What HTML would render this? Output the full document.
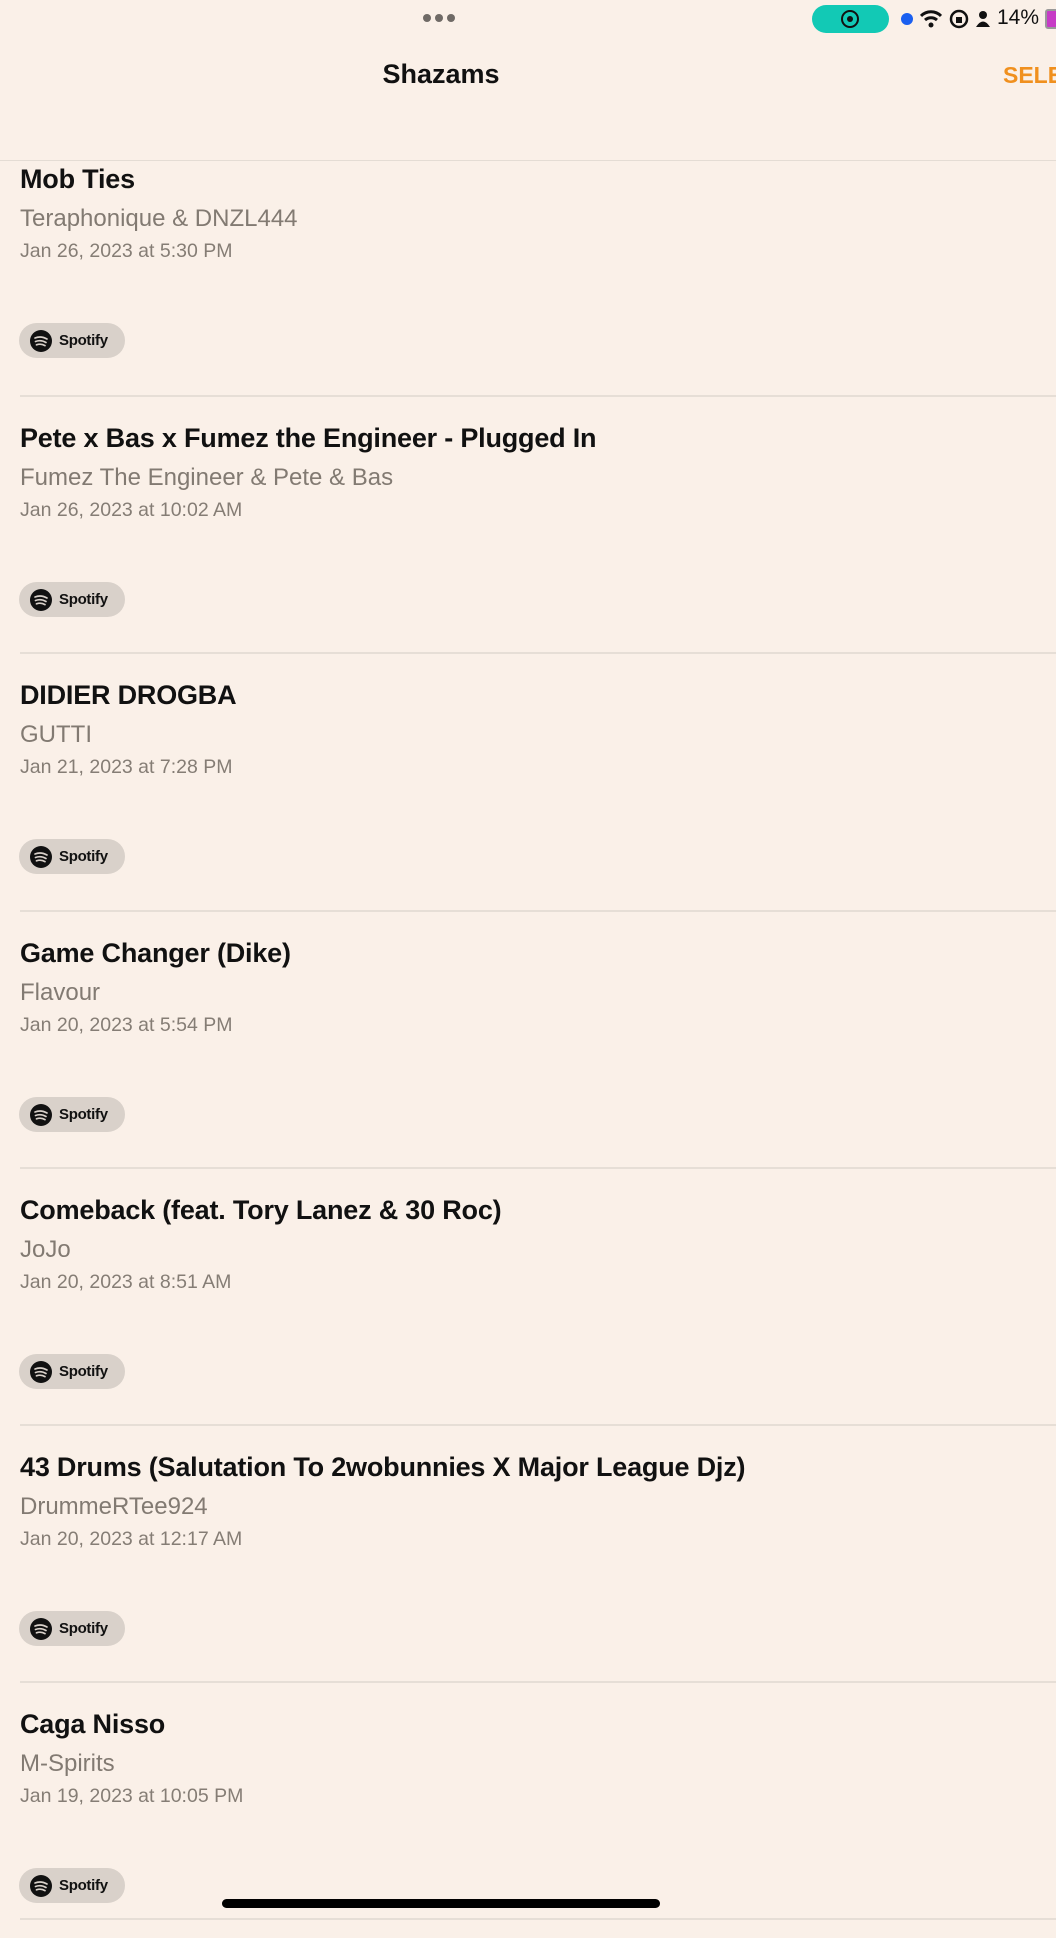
<!DOCTYPE html>
<html><head><meta charset="utf-8"><style>
*{margin:0;padding:0;box-sizing:border-box}
body{width:1056px;height:1920px;overflow:hidden;background:#faf0e8;font-family:"Liberation Sans",sans-serif;position:relative}
.abs{position:absolute}
.hdr{left:0;top:0;width:1056px;height:161px;background:#faf0e8;border-bottom:1.5px solid #e4dcd4;z-index:2}
.row{position:absolute;left:0;width:1056px;height:257px}
.row .ln{position:absolute;left:20px;right:0;top:0;height:1.5px;background:#e6ded6}
.t{position:absolute;left:20px;top:28px;font-size:27px;font-weight:bold;color:#111;letter-spacing:-0.2px;white-space:nowrap}
.a{position:absolute;left:20px;top:69px;font-size:24px;color:#827a72;white-space:nowrap}
.d{position:absolute;left:20px;top:104px;font-size:19.5px;color:#857d75;white-space:nowrap}
.p{position:absolute;left:19px;top:187px;width:106px;height:35px;border-radius:18px;background:#d9d1ca}
.p svg{position:absolute;left:11px;top:7px}
.p .s{position:absolute;left:40px;top:9px;font-size:15px;font-weight:bold;color:#111;letter-spacing:-0.3px}
</style></head><body>
<div class="abs hdr">
 <div class="abs" style="left:423px;top:14px;font-size:0">
  <span style="display:inline-block;width:8px;height:8px;border-radius:50%;background:#6f6a66;margin-right:4px"></span><span style="display:inline-block;width:8px;height:8px;border-radius:50%;background:#6f6a66;margin-right:4px"></span><span style="display:inline-block;width:8px;height:8px;border-radius:50%;background:#6f6a66"></span>
 </div>
 <div class="abs" style="left:812px;top:5px;width:77px;height:28px;border-radius:14px;background:#12c9b5"></div>
 <div class="abs" style="left:841px;top:10px;width:18px;height:18px;border-radius:50%;border:2.5px solid #111"></div>
 <div class="abs" style="left:847px;top:16px;width:6px;height:6px;border-radius:50%;background:#111"></div>
 <div class="abs" style="left:901px;top:13px;width:12px;height:12px;border-radius:50%;background:#1a5ff0"></div>
 <svg class="abs" style="left:920px;top:9px" width="22" height="20" viewBox="0 0 22 20"><path d="M1 7 A14 14 0 0 1 21 7" stroke="#111" stroke-width="3" fill="none"/><path d="M5 11 A9 9 0 0 1 17 11" stroke="#111" stroke-width="3" fill="none"/><circle cx="11" cy="16" r="2.5" fill="#111"/></svg>
 <svg class="abs" style="left:949px;top:9px" width="20" height="20" viewBox="0 0 20 20"><circle cx="10" cy="10" r="8" stroke="#111" stroke-width="2.5" fill="none"/><rect x="7" y="8" width="6" height="6" fill="#111"/></svg>
 <svg class="abs" style="left:975px;top:10px" width="16" height="18" viewBox="0 0 16 18"><circle cx="8" cy="5" r="4" fill="#111"/><path d="M1 17 Q8 6 15 17Z" fill="#111"/></svg>
 <div class="abs" style="left:997px;top:6px;font-size:21px;color:#111">14%</div>
 <div class="abs" style="left:1045px;top:9px;width:14px;height:20px;border:2px solid #999;border-radius:3px;background:#c63cc6"></div>
 <div class="abs" style="left:0;width:882px;text-align:center;top:59px;font-size:27px;font-weight:bold;color:#111">Shazams</div>
 <div class="abs" style="left:1003px;top:62px;font-size:23px;font-weight:bold;color:#f0901e">SELECT</div>
</div>

<div class="row" style="top:136px"><div class="t">Mob Ties</div><div class="a">Teraphonique &amp; DNZL444</div><div class="d">Jan 26, 2023 at 5:30 PM</div><div class="p"><svg width="22" height="22" viewBox="0 0 22 22"><circle cx="11" cy="11" r="11" fill="#111"/><path d="M5 8 Q11 5.5 17 9 M5.5 11.5 Q11 9.5 16 12.5 M6.5 14.8 Q11 13.3 15 15.6" stroke="#d9d1ca" stroke-width="1.7" fill="none" stroke-linecap="round"/></svg><div class="s">Spotify</div></div></div>
<div class="row" style="top:395px"><div class="ln"></div><div class="t">Pete x Bas x Fumez the Engineer - Plugged In</div><div class="a">Fumez The Engineer &amp; Pete &amp; Bas</div><div class="d">Jan 26, 2023 at 10:02 AM</div><div class="p"><svg width="22" height="22" viewBox="0 0 22 22"><circle cx="11" cy="11" r="11" fill="#111"/><path d="M5 8 Q11 5.5 17 9 M5.5 11.5 Q11 9.5 16 12.5 M6.5 14.8 Q11 13.3 15 15.6" stroke="#d9d1ca" stroke-width="1.7" fill="none" stroke-linecap="round"/></svg><div class="s">Spotify</div></div></div>
<div class="row" style="top:652px"><div class="ln"></div><div class="t">DIDIER DROGBA</div><div class="a">GUTTI</div><div class="d">Jan 21, 2023 at 7:28 PM</div><div class="p"><svg width="22" height="22" viewBox="0 0 22 22"><circle cx="11" cy="11" r="11" fill="#111"/><path d="M5 8 Q11 5.5 17 9 M5.5 11.5 Q11 9.5 16 12.5 M6.5 14.8 Q11 13.3 15 15.6" stroke="#d9d1ca" stroke-width="1.7" fill="none" stroke-linecap="round"/></svg><div class="s">Spotify</div></div></div>
<div class="row" style="top:910px"><div class="ln"></div><div class="t">Game Changer (Dike)</div><div class="a">Flavour</div><div class="d">Jan 20, 2023 at 5:54 PM</div><div class="p"><svg width="22" height="22" viewBox="0 0 22 22"><circle cx="11" cy="11" r="11" fill="#111"/><path d="M5 8 Q11 5.5 17 9 M5.5 11.5 Q11 9.5 16 12.5 M6.5 14.8 Q11 13.3 15 15.6" stroke="#d9d1ca" stroke-width="1.7" fill="none" stroke-linecap="round"/></svg><div class="s">Spotify</div></div></div>
<div class="row" style="top:1167px"><div class="ln"></div><div class="t">Comeback (feat. Tory Lanez &amp; 30 Roc)</div><div class="a">JoJo</div><div class="d">Jan 20, 2023 at 8:51 AM</div><div class="p"><svg width="22" height="22" viewBox="0 0 22 22"><circle cx="11" cy="11" r="11" fill="#111"/><path d="M5 8 Q11 5.5 17 9 M5.5 11.5 Q11 9.5 16 12.5 M6.5 14.8 Q11 13.3 15 15.6" stroke="#d9d1ca" stroke-width="1.7" fill="none" stroke-linecap="round"/></svg><div class="s">Spotify</div></div></div>
<div class="row" style="top:1424px"><div class="ln"></div><div class="t">43 Drums (Salutation To 2wobunnies X Major League Djz)</div><div class="a">DrummeRTee924</div><div class="d">Jan 20, 2023 at 12:17 AM</div><div class="p"><svg width="22" height="22" viewBox="0 0 22 22"><circle cx="11" cy="11" r="11" fill="#111"/><path d="M5 8 Q11 5.5 17 9 M5.5 11.5 Q11 9.5 16 12.5 M6.5 14.8 Q11 13.3 15 15.6" stroke="#d9d1ca" stroke-width="1.7" fill="none" stroke-linecap="round"/></svg><div class="s">Spotify</div></div></div>
<div class="row" style="top:1681px"><div class="ln"></div><div class="t">Caga Nisso</div><div class="a">M-Spirits</div><div class="d">Jan 19, 2023 at 10:05 PM</div><div class="p"><svg width="22" height="22" viewBox="0 0 22 22"><circle cx="11" cy="11" r="11" fill="#111"/><path d="M5 8 Q11 5.5 17 9 M5.5 11.5 Q11 9.5 16 12.5 M6.5 14.8 Q11 13.3 15 15.6" stroke="#d9d1ca" stroke-width="1.7" fill="none" stroke-linecap="round"/></svg><div class="s">Spotify</div></div></div>
<div class="abs" style="left:20px;right:0;top:1918px;height:1.5px;background:#e6ded6"></div>
<div class="abs" style="left:222px;top:1899px;width:438px;height:9px;border-radius:5px;background:#000"></div>
</body></html>
